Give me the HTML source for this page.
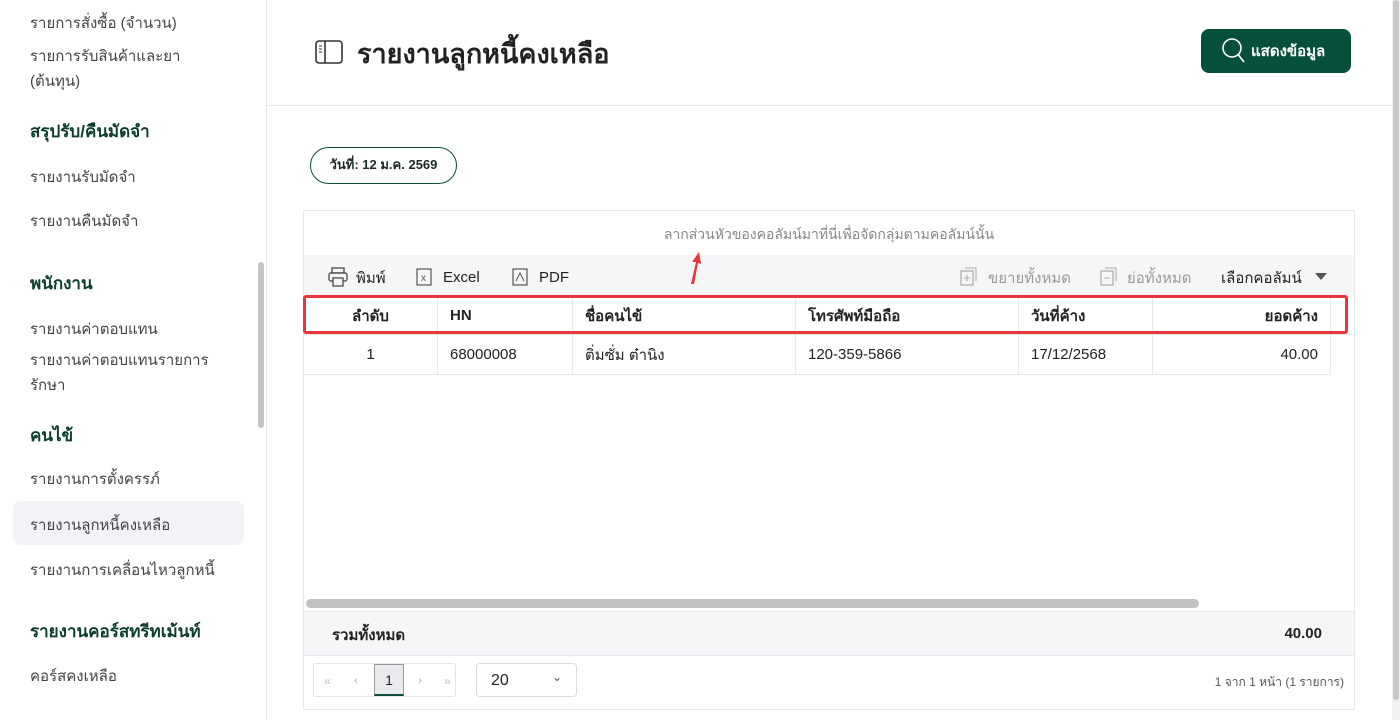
<!DOCTYPE html>
<html><head><meta charset="utf-8"><style>
*{box-sizing:border-box;margin:0;padding:0}
body{width:1400px;height:720px;overflow:hidden;font-family:"Liberation Sans","Noto Sans CJK SC",sans-serif;background:#fff;position:relative;color:#222}
.sb{position:absolute;left:0;top:0;width:267px;height:720px;border-right:1px solid #e6e8ec}
.sb div{position:absolute;left:30px;font-size:15px;color:#444}
.sb .h{font-weight:bold;font-size:17px;color:#0d3d2c}
.abs{position:absolute}
.grid{position:absolute;left:303px;top:210px;width:1052px;height:500px;border:1px solid #e6e8ec}
.cell{position:absolute;font-size:15px;top:0;height:100%;display:flex;align-items:center;padding:0 12px;border-right:1px solid #e6e8ec}
</style></head><body>
<div class="sb">
<div style="top:11px">รายการสั่งซื้อ (จำนวน)</div>
<div style="top:44px">รายการรับสินค้าและยา</div>
<div style="top:69px">(ต้นทุน)</div>
<div class="h" style="top:118px">สรุปรับ/คืนมัดจำ</div>
<div style="top:165px">รายงานรับมัดจำ</div>
<div style="top:209px">รายงานคืนมัดจำ</div>
<div class="h" style="top:270px">พนักงาน</div>
<div style="top:317px">รายงานค่าตอบแทน</div>
<div style="top:348px">รายงานค่าตอบแทนรายการ</div>
<div style="top:373px">รักษา</div>
<div class="h" style="top:422px">คนไข้</div>
<div style="top:467px">รายงานการตั้งครรภ์</div>
<div style="left:13px;top:501px;width:231px;height:44px;background:#f1f3f6;border-radius:8px"></div>
<div style="top:513px">รายงานลูกหนี้คงเหลือ</div>
<div style="top:558px">รายงานการเคลื่อนไหวลูกหนี้</div>
<div class="h" style="top:618px">รายงานคอร์สทรีทเม้นท์</div>
<div style="top:664px">คอร์สคงเหลือ</div>
<div style="left:258px;top:262px;width:6px;height:166px;background:#c4c4c4;border-radius:3px"></div>
</div>
<div class="abs" style="left:267px;top:105px;width:1125px;height:1px;background:#e6e8ec"></div>
<div class="abs" style="left:1392px;top:0;width:8px;height:720px;background:#f1f1f1"></div>
<div class="abs" style="left:1393px;top:0;width:6px;height:700px;background:#c8c8c8;border-radius:3px"></div>
<svg class="abs" style="left:315px;top:40px" width="28" height="24" viewBox="0 0 28 24"><rect x="1" y="1" width="26" height="22" rx="3" fill="none" stroke="#333" stroke-width="1.6"/><line x1="10" y1="1" x2="10" y2="23" stroke="#333" stroke-width="1.6"/><line x1="4" y1="6" x2="7" y2="6" stroke="#333"/><line x1="4" y1="9" x2="7" y2="9" stroke="#333"/><line x1="4" y1="12" x2="7" y2="12" stroke="#333"/></svg>
<div class="abs" style="left:357px;top:32px;font-size:27px;font-weight:bold;color:#222">รายงานลูกหนี้คงเหลือ</div>
<div class="abs" style="left:1201px;top:29px;width:150px;height:44px;background:#064f3b;border-radius:8px;color:#fff;font-weight:bold;font-size:15px;display:flex;align-items:center;padding-left:20px">
<svg width="26" height="28" viewBox="0 0 26 28" style="margin-right:4px"><circle cx="11" cy="11" r="9" fill="none" stroke="#fff" stroke-width="1.6"/><line x1="17.5" y1="18" x2="23" y2="25" stroke="#fff" stroke-width="1.6"/></svg>แสดงข้อมูล</div>
<div class="abs" style="left:310px;top:147px;width:147px;height:37px;border:1.5px solid #0d4d3a;border-radius:19px;font-size:13px;font-weight:bold;display:flex;align-items:center;justify-content:center;color:#1c2a25;padding-bottom:3px">วันที่: 12 ม.ค. 2569</div>
<div class="grid">
<div class="abs" style="left:0;top:0;width:1050px;height:44px;font-size:14px;color:#888;text-align:center;line-height:46px">ลากส่วนหัวของคอลัมน์มาที่นี่เพื่อจัดกลุ่มตามคอลัมน์นั้น</div>
<div class="abs" style="left:0;top:44px;width:1050px;height:42px;background:#f5f6f8;font-size:15px">
<svg class="abs" style="left:24px;top:12px" width="20" height="20" viewBox="0 0 20 20"><rect x="4" y="1" width="12" height="5" fill="#f5f6f8" stroke="#555" stroke-width="1.4"/><rect x="1" y="6" width="18" height="8" rx="2" fill="#f5f6f8" stroke="#555" stroke-width="1.4"/><rect x="5" y="11" width="10" height="8" fill="#f5f6f8" stroke="#555" stroke-width="1.4"/></svg>
<div class="abs" style="left:52px;top:11px">พิมพ์</div>
<svg class="abs" style="left:112px;top:13px" width="16" height="18"><rect x="1" y="1" width="14" height="16" fill="none" stroke="#555" stroke-width="1.2"/><text x="5" y="13" font-size="10" fill="#555">x</text></svg>
<div class="abs" style="left:139px;top:14px">Excel</div>
<svg class="abs" style="left:208px;top:13px" width="16" height="18"><rect x="1" y="1" width="14" height="16" fill="none" stroke="#555" stroke-width="1.2"/><path d="M4 13 L8 5 L12 13" fill="none" stroke="#555"/></svg>
<div class="abs" style="left:235px;top:14px">PDF</div>
<svg class="abs" style="left:656px;top:12px" width="18" height="20"><rect x="1" y="4" width="12" height="14" fill="none" stroke="#aaa" stroke-width="1.2"/><path d="M5 1H16V14" fill="none" stroke="#aaa"/><path d="M7 8v6M4 11h6" stroke="#aaa"/></svg>
<div class="abs" style="left:684px;top:11px;color:#999">ขยายทั้งหมด</div>
<svg class="abs" style="left:796px;top:12px" width="18" height="20"><rect x="1" y="4" width="12" height="14" fill="none" stroke="#aaa" stroke-width="1.2"/><path d="M5 1H16V14" fill="none" stroke="#aaa"/><path d="M4 11h6" stroke="#aaa"/></svg>
<div class="abs" style="left:823px;top:11px;color:#999">ย่อทั้งหมด</div>
<div class="abs" style="left:917px;top:11px;color:#222">เลือกคอลัมน์</div>
<div class="abs" style="left:1011px;top:18px;width:0;height:0;border-left:6px solid transparent;border-right:6px solid transparent;border-top:7px solid #555"></div>
</div>
<div class="abs" style="left:0;top:86px;width:1050px;height:38px;background:#fff;border-bottom:1px solid #e6e8ec;font-weight:bold">
<div class="cell" style="left:0;width:134px;justify-content:center">ลำดับ</div>
<div class="cell" style="left:134px;width:135px">HN</div>
<div class="cell" style="left:269px;width:223px">ชื่อคนไข้</div>
<div class="cell" style="left:492px;width:223px">โทรศัพท์มือถือ</div>
<div class="cell" style="left:715px;width:134px">วันที่ค้าง</div>
<div class="cell" style="left:849px;width:178px;justify-content:flex-end">ยอดค้าง</div>
</div>
<div class="abs" style="left:0;top:124px;width:1027px;height:40px;border-bottom:1px solid #e6e8ec">
<div class="cell" style="left:0;width:134px;justify-content:center">1</div>
<div class="cell" style="left:134px;width:135px">68000008</div>
<div class="cell" style="left:269px;width:223px">ติ่มซั่ม ต๋านิง</div>
<div class="cell" style="left:492px;width:223px">120-359-5866</div>
<div class="cell" style="left:715px;width:134px">17/12/2568</div>
<div class="cell" style="left:849px;width:178px;justify-content:flex-end">40.00</div>
</div>
<div class="abs" style="left:2px;top:388px;width:893px;height:9px;background:#c1c1c1;border-radius:5px"></div>
<div class="abs" style="left:0;top:400px;width:1050px;height:45px;background:#f5f6f8;border-top:1px solid #e6e8ec;border-bottom:1px solid #e6e8ec;font-weight:bold;font-size:15px">
<div class="abs" style="left:28px;top:11px">รวมทั้งหมด</div>
<div class="abs" style="right:32px;top:13px">40.00</div>
</div>
<div class="abs" style="left:9px;top:452px;width:143px;height:34px;border:1px solid #e3e5e8;border-radius:3px;font-size:12px;color:#bbb">
<div class="abs" style="left:10px;top:10px">«</div><div class="abs" style="left:40px;top:9px">‹</div>
<div class="abs" style="left:60px;top:0;width:30px;height:32px;background:#e8eaed;border:1px solid #999;border-bottom:2px solid #0d4d3a;color:#222;font-size:14px;text-align:center;line-height:30px">1</div>
<div class="abs" style="left:104px;top:9px">›</div><div class="abs" style="left:130px;top:10px">»</div>
</div>
<div class="abs" style="left:172px;top:452px;width:101px;height:34px;border:1px solid #ddd;border-radius:4px;font-size:16px;padding:8px 14px">20<span style="position:absolute;right:14px;top:6px;font-size:12px;color:#555">⌄</span></div>
<div class="abs" style="right:10px;top:462px;font-size:12px;color:#555">1 จาก 1 หน้า (1 รายการ)</div>
</div>
<div class="abs" style="left:303px;top:295px;width:1045px;height:39px;border:3px solid #e8343c;border-radius:3px"></div>
<svg class="abs" style="left:686px;top:250px" width="20" height="36"><path d="M5 34 L10 12 L6 12 L13 2 L15 14 L12 13 L8 34Z" fill="#e8343c"/></svg>
</body></html>
